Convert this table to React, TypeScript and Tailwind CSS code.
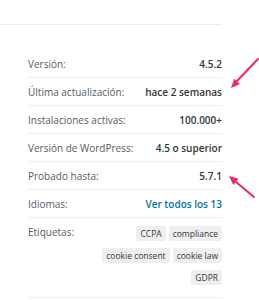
import React from 'react';

type Row = { label: string; value: string; link?: boolean };

const rows: Row[] = [
  { label: 'Versión:', value: '4.5.2' },
  { label: 'Última actualización:', value: 'hace 2 semanas' },
  { label: 'Instalaciones activas:', value: '100.000+' },
  { label: 'Versión de WordPress:', value: '4.5 o superior' },
  { label: 'Probado hasta:', value: '5.7.1' },
  { label: 'Idiomas:', value: 'Ver todos los 13', link: true },
];

const tags = ['CCPA', 'compliance', 'cookie consent', 'cookie law', 'GDPR'];

function MetaRow({ label, value, link }: Row) {
  return (
    <li className="flex h-[28px] items-center justify-between border-b border-[#eeeeee]">
      <span className="text-[#555d66]">{label}</span>
      <strong className={link ? 'font-semibold text-[#0073aa]' : 'font-semibold text-[#32373c]'}>
        {value}
      </strong>
    </li>
  );
}

// pink callout arrows over the meta list
function Arrows() {
  return (
    <svg className="pointer-events-none absolute left-0 top-0" width="259" height="300" viewBox="0 0 259 300">
      <g stroke="#f2266e" strokeWidth="2" strokeLinecap="round" fill="#f2266e">
        <line x1="258" y1="59" x2="237" y2="81" />
        <polygon points="231,88 240,84.1 234.2,78.7" stroke="none" />
        <line x1="254" y1="197" x2="236" y2="182" />
        <polygon points="229,176 238.5,178.7 233.3,184.9" stroke="none" />
      </g>
    </svg>
  );
}

export default function App() {
  return (
    <div
      className="relative h-[300px] w-[259px] overflow-hidden bg-white text-[10px]"
      style={{ fontFamily: '"Open Sans", "Noto Sans", sans-serif' }}
    >
      <div className="h-[24px]" />
      <div className="h-px w-[222px] bg-[#ececec]" />

      <ul className="ml-[28px] mt-[25px] w-[194px] leading-[14px]">
        {rows.map((r) => (
          <MetaRow key={r.label} {...r} />
        ))}
        <li className="flex items-start justify-between border-b border-[#eeeeee] pb-[12px] pt-[8px]">
          <span className="leading-[12px] text-[#555d66]">Etiquetas:</span>
          <div className="flex w-[124px] flex-wrap justify-end gap-x-[3px] gap-y-[7px]">
            {tags.map((t) => (
              <span
                key={t}
                className="flex h-[15px] items-center rounded-[2px] bg-[#efefef] px-[4px] text-[8.5px] text-[#32373c]"
              >
                {t}
              </span>
            ))}
          </div>
        </li>
      </ul>

      <Arrows />
    </div>
  );
}
